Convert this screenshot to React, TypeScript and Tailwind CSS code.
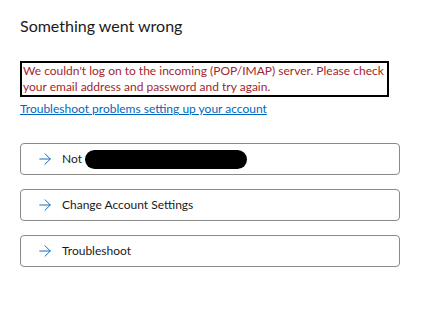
import { ArrowRight } from "lucide-react";

const font = { fontFamily: 'Lato, "Noto Sans", sans-serif' };

function ActionButton({ children }: { children: React.ReactNode }) {
    return (
        <button className="flex items-center h-[32px] w-[380px] border border-[#8a8a8a] rounded-[4px] bg-white pl-[15px] text-[12px] text-[#1a1a1a]">
            <ArrowRight size={18} strokeWidth={1.25} className="text-[#0067c0] mr-[8px]" />
            {children}
        </button>
    );
}

export default function App() {
    return (
        <div className="w-[422px] h-[312px] bg-white pl-[20px] pt-[14px]" style={font}>
            <h1 className="text-[16px] text-[#1a1a1a] leading-[24px]">Something went wrong</h1>

            <div className="mt-[23px] w-[369px] border-2 border-black px-[1px] text-[12px] leading-[16px] text-[#a4262c]">
                We couldn't log on to the incoming (POP/IMAP) server. Please check your email address and password and try again.
            </div>

            <a href="#" className="block mt-[4px] text-[12px] leading-[16px] text-[#0067c0] underline">
                Troubleshoot problems setting up your account
            </a>

            <div className="flex flex-col gap-[14px] mt-[26px]">
                <ActionButton>
                    Not
                    <span className="ml-[3px] h-[19px] w-[162px] rounded-full bg-black" />
                </ActionButton>
                <ActionButton>Change Account Settings</ActionButton>
                <ActionButton>Troubleshoot</ActionButton>
            </div>
        </div>
    );
}
